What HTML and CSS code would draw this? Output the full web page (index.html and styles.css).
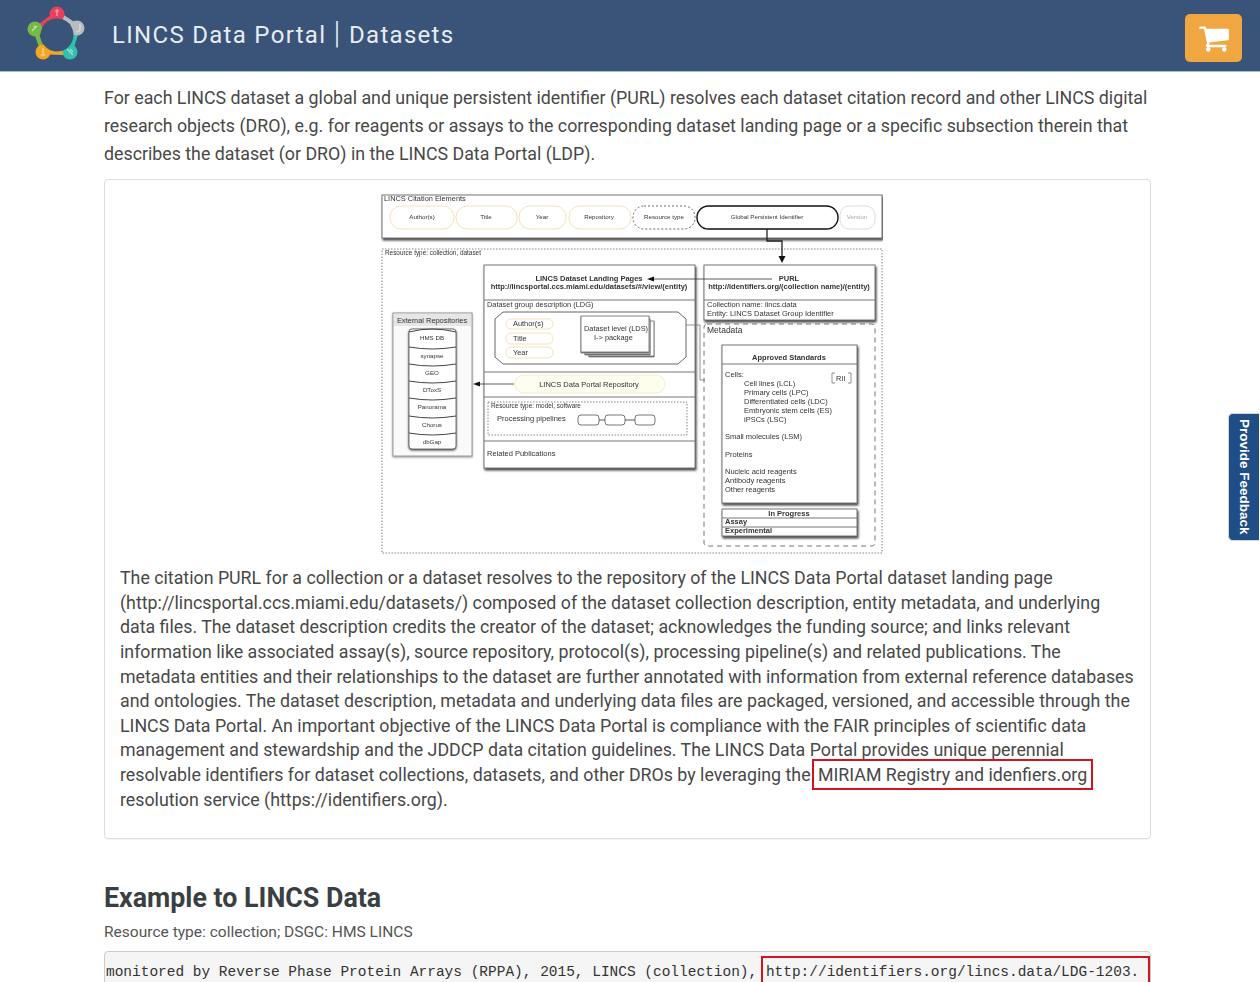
FILE: index.html
```html
<!DOCTYPE html>
<html lang="en">
<head>
<meta charset="utf-8">
<title>LINCS Data Portal | Datasets</title>
<link rel="stylesheet" href="styles.css">
</head>
<body>
<header class="topbar">
  <svg class="logo" viewBox="27 5 60 58" aria-hidden="true">
    <g class="ring">
      <path class="seg-red" d="M57 14 L36 30"/>
      <path class="seg-grey" d="M57 14 L78 28"/>
      <path class="seg-teal" d="M78 28 L70 54"/>
      <path class="seg-orange" d="M70 54 L43 53"/>
      <path class="seg-green" d="M43 53 L35 30"/>
    </g>
    <circle class="node-red" cx="57" cy="15" r="7.500"/>
    <circle class="node-grey" cx="77" cy="29" r="7.500"/>
    <circle class="node-teal" cx="70" cy="53" r="7.500"/>
    <circle class="node-orange" cx="43" cy="53" r="7.500"/>
    <circle class="node-green" cx="35" cy="30" r="7.500"/>
    <circle class="hole" cx="57" cy="36" r="16.500"/>
    <g class="node-marks">
      <path d="M57 10v7M55 12h4"/>
      <path d="M80 25v6q-1 2-4 2"/>
      <path d="M67 50l6 6M70 50l3 3"/>
      <path d="M43 49v7M40.500 56h5"/>
      <path d="M32 32l5-5M34 27l2 2M33 33h.1"/>
    </g>
  </svg>
  <h1 class="brand">LINCS Data Portal <span class="brand-bar">|</span> Datasets</h1>
  <button class="cart" type="button" aria-label="Cart">
    <svg viewBox="0 0 1792 1792" aria-hidden="true"><path d="M704 1536q0 52-38 90t-90 38-90-38-38-90 38-90 90-38 90 38 38 90zm896 0q0 52-38 90t-90 38-90-38-38-90 38-90 90-38 90 38 38 90zm128-1088v512q0 24-16.500 42.500t-40.500 21.500l-1044 122q13 60 13 70 0 16-24 64h920q26 0 45 19t19 45-19 45-45 19h-1024q-26 0-45-19t-19-45q0-11 8-31.500t16-36 21.500-40 15.500-29.500l-177-823h-204q-26 0-45-19t-19-45 19-45 45-19h256q16 0 28.500 6.500t19.500 15.500 13 24.500 8 26 5.500 29.500 4.500 26h1201q26 0 45 19t19 45z"/></svg>
  </button>
</header>

<main class="page">
  <p class="intro">For each LINCS dataset a global and unique persistent identifier (PURL) resolves each dataset citation record and other LINCS digital research objects (DRO), e.g. for reagents or assays to the corresponding dataset landing page or a specific subsection therein that describes the dataset (or DRO) in the LINCS Data Portal (LDP).</p>

  <section class="card">
    <svg class="diagram" viewBox="381 193 502 362" role="img" aria-label="LINCS citation elements diagram">
      <!-- citation elements -->
      <rect class="box" x="382" y="195" width="500" height="43"/>
      <text class="t7" x="384" y="201">LINCS Citation Elements</text>
      <rect class="pill-y" x="390" y="206" width="64" height="23" rx="11"/>
      <rect class="pill-y" x="456" y="206" width="61" height="23" rx="11"/>
      <rect class="pill-y" x="519" y="206" width="47" height="23" rx="11"/>
      <rect class="pill-y" x="569" y="206" width="62" height="23" rx="11"/>
      <rect class="pill-dash" x="633" y="206" width="62" height="23" rx="11"/>
      <rect class="pill-k" x="697" y="206" width="141" height="23" rx="11.500"/>
      <rect class="pill-g" x="840" y="206" width="35" height="23" rx="9"/>
      <text class="t5 mid" x="422" y="219">Author(s)</text>
      <text class="t5 mid" x="486" y="219">Title</text>
      <text class="t5 mid" x="542" y="219">Year</text>
      <text class="t5 mid" x="599" y="219">Repository</text>
      <text class="t5 mid" x="664" y="219">Resource type</text>
      <text class="t5 mid" x="767" y="219">Global Persistent Identifier</text>
      <text class="t5 mid faint" x="857" y="219">Version</text>

      <!-- resource frame -->
      <rect class="dots" x="382" y="249" width="500" height="304"/>
      <text class="t6" x="385" y="255">Resource type:  collection, dataset</text>
      <path class="wire-b" d="M767 229V241H782V257"/>
      <path class="head" d="M778.500 256H785.500L782 263Z"/>

      <!-- external repositories -->
      <rect class="repo" x="393" y="313" width="79" height="143"/>
      <rect class="repo-head" x="394" y="314" width="77" height="12"/>
      <text class="t7 mid" x="432" y="323">External Repositories</text>
      <rect class="cyl" x="409" y="329" width="47" height="120" rx="3"/>
      <path class="cyl-line" d="M409 332Q432 326 456 332M409 347Q432 351 456 347M409 364Q432 368 456 364M409 381Q432 385 456 381M409 398Q432 402 456 398M409 416Q432 420 456 416M409 433Q432 437 456 433"/>
      <text class="t5 mid" x="432" y="340">HMS DB</text>
      <text class="t5 mid" x="432" y="358">synapse</text>
      <text class="t5 mid" x="432" y="375">GEO</text>
      <text class="t5 mid" x="432" y="392">DToxS</text>
      <text class="t5 mid" x="432" y="409">Panorama</text>
      <text class="t5 mid" x="432" y="427">Chorus</text>
      <text class="t5 mid" x="432" y="444">dbGap</text>

      <!-- landing page -->
      <rect class="box" x="484" y="265" width="211" height="203"/>
      <text class="t6 bold mid" x="589" y="281">LINCS Dataset Landing Pages</text>
      <text class="t6 bold mid" x="589" y="289">http://lincsportal.ccs.miami.edu/datasets/#/view/(entity)</text>
      <path class="rule" d="M484 300H695M484 372H695M484 397H695M484 441H695"/>
      <text class="t7" x="487" y="307">Dataset group description (LDG)</text>
      <path class="inner" d="M503 312H678L686 319V357L678 364H503L495 357V319Z"/>
      <rect class="pill-y" x="506" y="319" width="47" height="10" rx="5"/>
      <rect class="pill-y" x="506" y="333" width="47" height="11" rx="5"/>
      <rect class="pill-y" x="506" y="347" width="47" height="11" rx="5"/>
      <text class="t7" x="513" y="326">Author(s)</text>
      <text class="t7" x="513" y="341">Title</text>
      <text class="t7" x="513" y="355">Year</text>
      <rect class="paper" x="589" y="321" width="65" height="35"/>
      <rect class="paper" x="585" y="319" width="65" height="35"/>
      <rect class="paper" x="581" y="316" width="68" height="36"/>
      <text class="t7" x="584" y="331">Dataset level (LDS)</text>
      <text class="t7" x="594" y="340">I-&gt; package</text>
      <rect class="pill-pale" x="515" y="375" width="150" height="18" rx="9"/>
      <text class="t6-5 mid" x="589" y="387">LINCS Data Portal Repository</text>
      <path class="wire" d="M514 384H478"/>
      <path class="head" d="M480 381.500V386.500L473 384Z"/>
      <rect class="dots" x="488" y="402" width="199" height="33"/>
      <text class="t6" x="491" y="408">Resource type:  model, software</text>
      <text class="t6-5" x="497" y="421">Processing pipelines</text>
      <rect class="mini" x="578" y="415" width="21" height="10" rx="3"/>
      <rect class="mini" x="605" y="415" width="20" height="10" rx="3"/>
      <rect class="mini" x="635" y="415" width="20" height="10" rx="3"/>
      <path class="wire" d="M599 420H605M625 420H635"/>
      <text class="t6-5" x="487" y="456">Related Publications</text>

      <!-- PURL -->
      <rect class="box" x="704" y="265" width="171" height="55"/>
      <path class="wire" d="M772 279H652"/>
      <path class="head" d="M654 276.500V281.500L647 279Z"/>
      <text class="t6 bold mid" x="789" y="281">PURL</text>
      <text class="t6 bold mid" x="789" y="289">http://identifiers.org/(collection name)/(entity)</text>
      <path class="rule" d="M704 300H875"/>
      <text class="t6-5" x="707" y="307">Collection name:  lincs.data</text>
      <text class="t6-5" x="707" y="316">Entity:  LINCS Dataset Group Identifier</text>

      <!-- metadata -->
      <rect class="dash" x="704" y="324" width="171" height="222" rx="3"/>
      <path class="wire-g" d="M686 325H700V380H705"/>
      <text class="t8" x="707" y="333">Metadata</text>
      <rect class="box" x="722" y="345" width="135" height="158"/>
      <path class="rule" d="M722 364H857"/>
      <text class="t6-5 bold mid" x="789" y="360">Approved Standards</text>
      <text class="t6-5" x="725" y="377">Cells:</text>
      <text class="t6-5" x="744" y="386">Cell lines (LCL)</text>
      <text class="t6-5" x="744" y="395">Primary cells (LPC)</text>
      <text class="t6-5" x="744" y="404">Differentiated cells (LDC)</text>
      <text class="t6-5" x="744" y="413">Embryonic stem cells (ES)</text>
      <text class="t6-5" x="744" y="422">iPSCs (LSC)</text>
      <text class="t6-5" x="725" y="439">Small molecules (LSM)</text>
      <text class="t6-5" x="725" y="457">Proteins</text>
      <text class="t6-5" x="725" y="474">Nucleic acid reagents</text>
      <text class="t6-5" x="725" y="483">Antibody reagents</text>
      <text class="t6-5" x="725" y="492">Other reagents</text>
      <text class="t7" x="836" y="381">RII</text>
      <path class="wire-g" d="M835 373H832V383H835M848 373H851V383H848"/>
      <rect class="box" x="722" y="509" width="135" height="27"/>
      <path class="rule" d="M722 518H857M722 527H857"/>
      <text class="t6-5 bold mid" x="789" y="516">In Progress</text>
      <text class="t6-5 bold" x="725" y="524">Assay</text>
      <text class="t6-5 bold" x="725" y="533">Experimental</text>
    </svg>
    <p class="body-text">The citation PURL for a collection or a dataset resolves to the repository of the LINCS Data Portal dataset landing page (http://lincsportal.ccs.miami.edu/datasets/) composed of the dataset collection description, entity metadata, and underlying data files. The dataset description credits the creator of the dataset; acknowledges the funding source; and links relevant information like associated assay(s), source repository, protocol(s), processing pipeline(s) and related publications. The metadata entities and their relationships to the dataset are further annotated with information from external reference databases and ontologies. The dataset description, metadata and underlying data files are packaged, versioned, and accessible through the LINCS Data Portal. An important objective of the LINCS Data Portal is compliance with the FAIR principles of scientific data management and stewardship and the JDDCP data citation guidelines. The LINCS Data Portal provides unique perennial resolvable identifiers for dataset collections, datasets, and other DROs by leveraging the <span class="mark">MIRIAM Registry and idenfiers.org</span> resolution service (https://identifiers.org).</p>
  </section>

  <h2 class="example-title">Example to LINCS Data</h2>
  <p class="resource">Resource type: collection; DSGC: HMS LINCS</p>
  <pre class="citation">monitored by Reverse Phase Protein Arrays (RPPA), 2015, LINCS (collection), <span class="mark-code">http://identifiers.org/lincs.data/LDG-1203.</span></pre>
</main>

<a class="feedback" href="#">Provide Feedback</a>
</body>
</html>
```

FILE: styles.css
```css
html, body {
  margin: 0;
  height: 982px;
  overflow: hidden;
}
body {
  font-family: Roboto, "Liberation Sans", sans-serif;
  color: #484848;
  background: #fff;
}
.topbar {
  display: flex;
  align-items: center;
  height: 71px;
  padding: 0 18px 0 27px;
  background: #3a5378;
  border-bottom: 1px solid #a9b8cc;
}
.logo {
  width: 60px;
  height: 58px;
  flex: none;
  margin-top: -5px;
}
.ring path {
  fill: none;
  stroke-width: 4.500;
}
.seg-red { stroke: #e8405a; }
.seg-grey { stroke: #b9bdbf; }
.seg-teal { stroke: #2fc2ae; }
.seg-orange { stroke: #f5a623; }
.seg-green { stroke: #77b948; }
.node-red { fill: #e8405a; }
.node-grey { fill: #b9bdbf; }
.node-teal { fill: #2fc2ae; }
.node-orange { fill: #f5a623; }
.node-green { fill: #77b948; }
.hole { fill: #3a5378; }
.node-marks path {
  fill: none;
  stroke: #fff;
  stroke-opacity: .55;
  stroke-width: 1.200;
}
.brand {
  margin: -5px 0 0 25px;
  flex: 1;
  font-size: 24px;
  font-weight: 400;
  letter-spacing: 1.300px;
  color: #e6ecf4;
}
.brand-bar {
  font-size: 31px;
  font-weight: 300;
  line-height: 1;
}
.cart {
  width: 57px;
  height: 48px;
  margin-top: 5px;
  padding: 0;
  display: flex;
  align-items: center;
  justify-content: center;
  border: 0;
  border-radius: 5px;
  background: #f0a741;
}
.cart svg {
  width: 32px;
  height: 32px;
  fill: #fff;
}
.page {
  padding: 12px 109px 0 104px;
}
.intro {
  margin: 0 0 11px;
  font-size: 17.800px;
  line-height: 28px;
}
.card {
  border: 1px solid #ddd;
  border-radius: 4px;
  padding: 13px 15px 26px;
  box-shadow: 0 1px 1px rgba(0, 0, 0, .05);
}
.diagram {
  display: block;
  width: 502px;
  height: 362px;
  margin: 0 0 11px 261px;
  filter: blur(.35px);
}
.diagram text {
  font-family: "Liberation Sans", sans-serif;
  fill: #333;
}
.t5 { font-size: 6.200px; }
.t6 { font-size: 6.400px; }
.t6-5 { font-size: 7.500px; }
.t7 { font-size: 7.400px; }
.t8 { font-size: 8.500px; }
.bold { font-weight: 700; }
.t6.bold { font-size: 7.500px; }
.mid { text-anchor: middle; }
.diagram .faint { fill: #aaa; }
.box {
  fill: #fff;
  stroke: #777;
  stroke-width: 1;
  filter: drop-shadow(1px 2px 1px #444);
}
.rule {
  fill: none;
  stroke: #777;
  stroke-width: 1;
}
.pill-y {
  fill: #fff;
  stroke: #f3e4bd;
  stroke-width: 1;
}
.pill-pale {
  fill: #fdfdf0;
  stroke: #f3f0c6;
  stroke-width: 1;
}
.pill-dash {
  fill: #fff;
  stroke: #444;
  stroke-width: .8;
  stroke-dasharray: 2 2;
}
.pill-k {
  fill: #fff;
  stroke: #111;
  stroke-width: 1.400;
}
.pill-g {
  fill: #fff;
  stroke: #ddd;
  stroke-width: 1;
}
.dots {
  fill: none;
  stroke: #888;
  stroke-width: 1;
  stroke-dasharray: 1.500 1.500;
}
.dash {
  fill: none;
  stroke: #777;
  stroke-width: 1;
  stroke-dasharray: 5 4;
}
.wire {
  fill: none;
  stroke: #333;
  stroke-width: .8;
}
.wire-g {
  fill: none;
  stroke: #777;
  stroke-width: .8;
}
.wire-b {
  fill: none;
  stroke: #222;
  stroke-width: 1.300;
}
.head { fill: #111; }
.repo {
  fill: #fafafa;
  stroke: #999;
  stroke-width: 1;
  filter: drop-shadow(0 1px 1px #999);
}
.repo-head { fill: #e6e6e6; }
.cyl {
  fill: #fff;
  stroke: #555;
  stroke-width: .8;
  filter: drop-shadow(0 1.500px 1px #444);
}
.cyl-line {
  fill: none;
  stroke: #444;
  stroke-width: 1;
}
.inner {
  fill: #fff;
  stroke: #666;
  stroke-width: 1;
}
.paper {
  fill: #fff;
  stroke: #666;
  stroke-width: .8;
  filter: drop-shadow(0 1px .5px #777);
}
.mini {
  fill: #fff;
  stroke: #555;
  stroke-width: .8;
}
.body-text {
  margin: 0;
  font-size: 17.800px;
  line-height: 24.640px;
}
.mark {
  padding: 3px 4px;
  margin: 0 0 0 -1px;
  outline: 2px solid #d3131f;
}
.example-title {
  margin: 43px 0 0;
  font-size: 26.800px;
  line-height: 32px;
  font-weight: 700;
  color: #3a3f44;
}
.resource {
  margin: 7px 0 0;
  font-size: 15.550px;
  line-height: 22px;
  color: #555;
}
.citation {
  margin: 8px 0 0;
  padding: 10px 1px 9px;
  font-family: "Liberation Mono", monospace;
  font-size: 14.470px;
  line-height: 20px;
  white-space: pre;
  overflow: hidden;
  color: #333;
  background: #f5f5f5;
  border: 1px solid #ccc;
  border-radius: 4px;
}
.mark-code {
  margin-left: -5px;
  padding: 6px 9px 7px 3px;
  border: 2px solid #d3131f;
}
.feedback {
  position: fixed;
  top: 413px;
  right: 1px;
  width: 30px;
  height: 126px;
  display: flex;
  align-items: center;
  justify-content: center;
  writing-mode: vertical-rl;
  font-family: "Liberation Sans", sans-serif;
  font-size: 13.500px;
  font-weight: 700;
  color: #fff;
  text-decoration: none;
  background: #1f4e87;
  border: 1px solid #cfd8e4;
  border-right: 0;
  border-radius: 5px 0 0 5px;
}
```
